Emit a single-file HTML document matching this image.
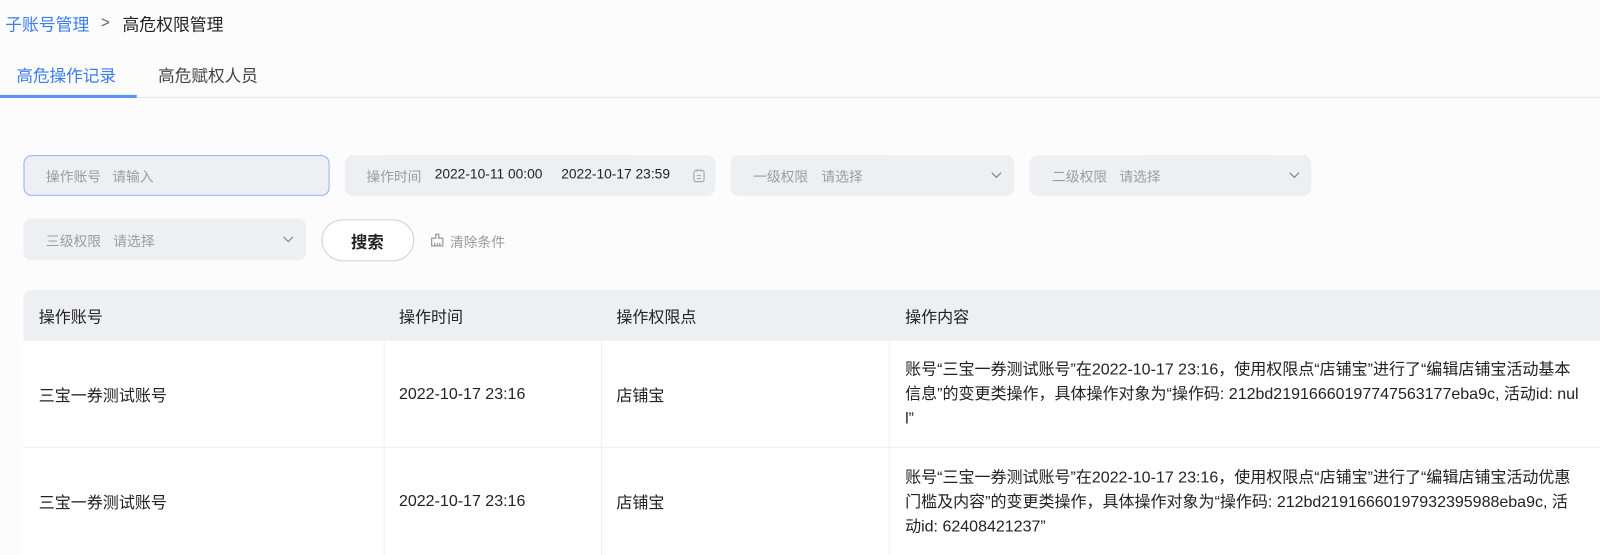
<!DOCTYPE html>
<html><head><meta charset="utf-8"><style>
*{margin:0;padding:0;box-sizing:border-box}
body{width:1600px;height:544px;overflow:hidden;background:#fcfcfd;font-family:"Liberation Sans","Noto Sans CJK SC",sans-serif;color:#222;font-size:15.7px}
#w{position:absolute;left:0;top:0;width:1568px;height:533px;transform:scale(1.0204);transform-origin:0 0}
.a{position:absolute;white-space:nowrap}
.box{position:absolute;background:#eeeff3;border-radius:8px;height:40px}
.lbl{color:#9a9ca3;font-size:13.5px}
.chev{position:absolute;width:7px;height:7px;border-right:1.6px solid #777;border-bottom:1.6px solid #777;transform:rotate(45deg)}
.vl{position:absolute;top:334px;height:210px;width:1px;background:#eeeff2}
</style></head><body><div id="w">
<div class="a" style="left:5px;top:11px;font-size:16.5px;color:#3b7cf0">子账号管理</div>
<div class="a" style="left:99px;top:14px;font-size:15px;color:#666">&gt;</div>
<div class="a" style="left:120px;top:11px;font-size:16.5px;color:#222">高危权限管理</div>

<div class="a" style="left:16px;top:61px;font-size:16.3px;color:#3b7cf0">高危操作记录</div>
<div class="a" style="left:155px;top:61px;font-size:16.3px;color:#444">高危赋权人员</div>
<div class="a" style="left:0;top:95px;width:1600px;height:1px;background:#e6e7ea"></div>
<div class="a" style="left:0;top:93px;width:134px;height:3px;background:#5b93f3"></div>

<div class="box" style="left:23px;top:152px;width:300px;border:1.5px solid #90b4f5"></div>
<div class="a lbl" style="left:45px;top:162px">操作账号</div>
<div class="a lbl" style="left:110px;top:162px">请输入</div>

<div class="box" style="left:338px;top:152px;width:363px"></div>
<div class="a lbl" style="left:359px;top:162px">操作时间</div>
<div class="a" style="left:426px;top:163px;font-size:13.5px;color:#222">2022-10-11 00:00</div>
<div class="a" style="left:550px;top:163px;font-size:13.5px;color:#222">2022-10-17 23:59</div>
<svg class="a" style="left:679px;top:165px" width="12" height="14" viewBox="0 0 12 14"><rect x="1" y="2" width="10" height="11" rx="2" fill="none" stroke="#aaa" stroke-width="1.2"/><path d="M4 1v2M8 1v2M4 7h4M4 10h4" stroke="#aaa" stroke-width="1.1"/></svg>

<div class="box" style="left:716px;top:152px;width:278px"></div>
<div class="a lbl" style="left:738px;top:162px">一级权限</div>
<div class="a lbl" style="left:805px;top:162px">请选择</div>
<div class="chev" style="left:973px;top:166px"></div>

<div class="box" style="left:1009px;top:152px;width:276px"></div>
<div class="a lbl" style="left:1031px;top:162px">二级权限</div>
<div class="a lbl" style="left:1097px;top:162px">请选择</div>
<div class="chev" style="left:1265px;top:166px"></div>

<div class="box" style="left:23px;top:214px;width:277px;height:41px"></div>
<div class="a lbl" style="left:45px;top:225px">三级权限</div>
<div class="a lbl" style="left:111px;top:225px">请选择</div>
<div class="chev" style="left:279px;top:229px"></div>

<div class="a" style="left:315px;top:215px;width:91px;height:41px;border:1.3px solid #cfd0d4;border-radius:21px;background:#fff"></div>
<div class="a" style="left:344px;top:224px;font-size:16px;font-weight:bold;color:#222">搜索</div>
<svg class="a" style="left:421px;top:228px" width="15" height="15" viewBox="0 0 15 15"><path d="M6 1.5h3v4h4v7.5H2V5.5h4z M5 13v-3 M7.5 13v-3 M10 13v-3" fill="none" stroke="#999" stroke-width="1.2"/></svg>
<div class="a" style="left:441px;top:226px;font-size:13.5px;color:#999">清除条件</div>

<div class="a" style="left:23px;top:284px;width:1600px;height:50px;background:#eeeff3;border-radius:8px 0 0 0"></div>
<div class="a" style="left:38px;top:298px">操作账号</div>
<div class="a" style="left:391px;top:298px">操作时间</div>
<div class="a" style="left:604px;top:298px">操作权限点</div>
<div class="a" style="left:887px;top:298px">操作内容</div>
<div class="a" style="left:23px;top:334px;width:1600px;height:210px;background:#fff"></div>
<div class="vl" style="left:376px"></div>
<div class="vl" style="left:589px"></div>
<div class="vl" style="left:871px"></div>
<div class="a" style="left:23px;top:438px;width:1600px;height:1px;background:#eeeff2"></div>

<div class="a" style="left:38px;top:375px">三宝一券测试账号</div>
<div class="a" style="left:391px;top:378px">2022-10-17 23:16</div>
<div class="a" style="left:604px;top:375px">店铺宝</div>
<div class="a" style="left:887px;top:351px;line-height:24px">账号“三宝一券测试账号”在2022-10-17 23:16，使用权限点“店铺宝”进行了“编辑店铺宝活动基本<br>信息”的变更类操作，具体操作对象为“操作码: 212bd21916660197747563177eba9c, 活动id: nul<br>l”</div>

<div class="a" style="left:38px;top:480px">三宝一券测试账号</div>
<div class="a" style="left:391px;top:483px">2022-10-17 23:16</div>
<div class="a" style="left:604px;top:480px">店铺宝</div>
<div class="a" style="left:887px;top:457px;line-height:24px">账号“三宝一券测试账号”在2022-10-17 23:16，使用权限点“店铺宝”进行了“编辑店铺宝活动优惠<br>门槛及内容”的变更类操作，具体操作对象为“操作码: 212bd21916660197932395988eba9c, 活<br>动id: 62408421237”</div>
</div></body></html>
